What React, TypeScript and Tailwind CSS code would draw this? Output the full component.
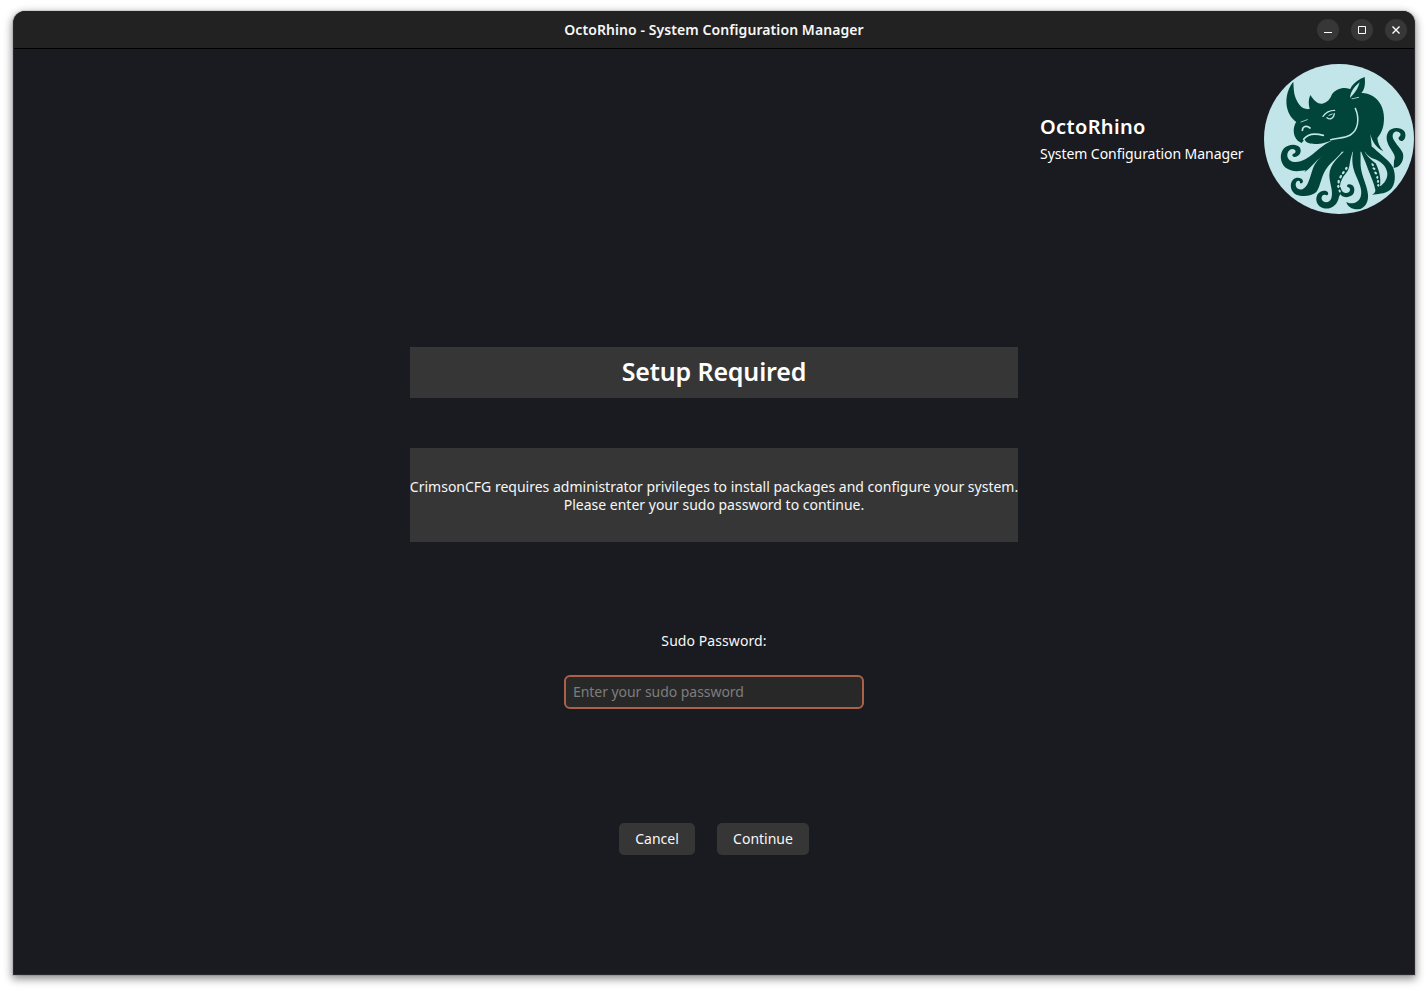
import type { ReactNode } from "react";

const DARK = "#01443a";
const LIGHT = "#c1e5e8";

function OctoRhinoLogo() {
  return (
    <svg viewBox="15 12 450 450" className="block h-[150px] w-[150px] shrink-0" role="img">
      <circle cx="240" cy="237" r="225" fill={LIGHT} />
      <g fill={DARK}>
        {/* head, horns and neck */}
        <path d="M103 65 C82 90 78 125 86 150 C92 168 101 178 112 186 C104 196 102 214 107 228 C112 240 120 246 128 249 L137 238 C140 248 150 252 168 252 C190 252 200 247 215 243 L225 262 L250 275 L330 275 L338 258 L334 222 C340 245 350 262 373 274 C362 260 356 248 355 234 C368 220 375 200 375 175 C375 145 362 122 342 109 C325 99 312 97 300 100 L270 86 C252 80 228 88 219 103 C214 116 206 128 190 131 C178 133 166 124 154 105 C148 118 148 132 152 147 C130 150 118 135 109 112 C104 98 104 82 103 65 Z" />
        {/* upper left arm */}
        <path d="M225 240 C190 252 170 280 140 297 C115 312 88 308 85 288 C84 272 98 262 108 270 C112 275 108 281 103 281 C97 284 101 291 108 291 C122 290 130 275 122 262 C112 250 88 252 75 265 C60 282 64 308 78 322 C98 338 122 334 140 330 L136 336 C150 330 162 312 178 298 C195 284 212 276 232 266 Z" />
        {/* lower left arm */}
        <path d="M226 262 C192 282 172 300 162 325 C153 350 148 382 130 388 C114 392 106 376 112 366 C116 360 124 362 123 368 C124 372 131 371 132 364 C131 353 112 349 102 359 C90 371 95 396 112 404 C130 411 158 409 172 396 C186 378 185 345 208 318 C225 300 240 288 248 276 L255 255 Z" />
        {/* bottom left arm */}
        <path d="M268 262 C240 290 212 312 211 345 C211 370 224 392 217 415 C212 430 193 430 188 418 C186 408 193 402 200 405 C206 408 210 402 206 396 C198 388 182 393 175 404 C166 422 177 440 194 445 C218 449 236 434 240 410 L246 398 C240 380 244 366 252 352 C258 342 268 335 271 318 C274 298 279 280 284 265 Z" />
        {/* bottom arm */}
        <path d="M284 265 C276 300 281 325 291 347 C302 372 311 391 305 410 C299 429 276 435 262 426 C265 440 280 449 297 448 C318 446 329 425 327 404 C325 378 308 350 305 318 C304 300 306 280 303 258 Z" />
        {/* right arms */}
        <path d="M304 268 C310 288 320 305 326 325 C336 350 345 370 349 389 C350 396 345 401 339 405 C356 401 376 403 392 391 C411 375 411 341 401 320 C388 298 362 283 345 265 L325 250 L309 254 C315 277 328 290 344 296 C366 304 382 317 385 339 C386 357 376 370 363 379 C367 355 360 330 350 310 C337 300 318 284 312 263 Z" />
        <path d="M404 324 L415 321 C431 311 436 291 431 278 C424 262 403 245 401 230 C400 217 412 211 420 217 C428 222 424 229 420 231 C416 236 422 244 430 243 C440 239 442 224 436 214 C424 200 398 201 388 215 C377 232 386 251 394 265 C403 280 412 290 405 302 Z" />
        {/* curled tip beside the bottom arm */}
        <path d="M239 390 C243 418 275 416 284 400 C290 386 283 373 271 373 C263 373 262 381 268 382 C277 385 274 401 259 399 C250 397 246 390 245 380 Z" />
        {/* ear */}
        <path d="M269 114 C264 94 283 62 317 51 C319 67 318 83 312 92 C306 102 298 106 290 110 Z" />
      </g>
      <path d="M273 114 C274 98 283 82 302 67 C298 81 292 94 281 105 Z" fill={LIGHT} />
      <g fill="none" stroke={LIGHT} strokeLinecap="round">
        <path d="M279 116 C284 118 291 112 299 112" strokeWidth="2.5" />
        <path d="M289 145 C303 177 297 211 274 225 C255 236 237 233 215 239" strokeWidth="4.5" />
        <path d="M134 238 C145 222 166 219 193 226" strokeWidth="5" />
        <path d="M130 211 C131 199 142 195 153 204" strokeWidth="5" />
        <path d="M126 186 L145 179" strokeWidth="2.5" />
        <path d="M192 169 C201 156 212 151 227 151" strokeWidth="4" />
        <path d="M204 173 C213 181 225 175 226 161" strokeWidth="4" />
        <path d="M210 166 L220 162" strokeWidth="3" />
      </g>
      {/* suckers */}
      <g fill={LIGHT}>
        <ellipse cx="262" cy="325" rx="3.5" ry="5" transform="rotate(30 262 325)" />
        <ellipse cx="253" cy="338" rx="3.5" ry="5.5" transform="rotate(35 253 338)" />
        <ellipse cx="245" cy="350" rx="3.5" ry="5.5" transform="rotate(25 245 350)" />
        <ellipse cx="239" cy="365" rx="3.5" ry="5.5" />
        <ellipse cx="238" cy="379" rx="3.5" ry="5" />
        <ellipse cx="242" cy="393" rx="3" ry="5" transform="rotate(-25 242 393)" />
        <ellipse cx="341" cy="314" rx="3" ry="5" transform="rotate(-35 341 314)" />
        <ellipse cx="345" cy="326" rx="3.5" ry="5" transform="rotate(-55 345 326)" />
        <ellipse cx="350" cy="339" rx="3.5" ry="5" transform="rotate(-40 350 339)" />
        <ellipse cx="355" cy="352" rx="3" ry="5" />
        <ellipse cx="357" cy="364" rx="3" ry="5" />
        <ellipse cx="358" cy="376" rx="3" ry="4" />
      </g>
    </svg>
  );
}

function WindowButton({ label, children }: { label: string; children: ReactNode }) {
  return (
    <button aria-label={label} className="flex h-[22px] w-[22px] items-center justify-center rounded-full bg-[#373737]">
      <svg viewBox="0 0 22 22" className="h-[22px] w-[22px]" fill="none" stroke="#fff">
        {children}
      </svg>
    </button>
  );
}

function TitleBar() {
  return (
    <header className="grid h-[38px] grid-cols-[1fr_auto_1fr] items-center border-b border-black bg-[#222222]">
      <span />
      <h1 className="text-[14px] font-semibold tracking-[0.08px] whitespace-nowrap text-[#f7f7f7]">OctoRhino - System Configuration Manager</h1>
      <div className="flex justify-end gap-3 pr-[7px]">
        <WindowButton label="Minimize"><path d="M7 13.5h8" /></WindowButton>
        <WindowButton label="Maximize"><path d="M7.5 7.5h7v7h-7z" /></WindowButton>
        <WindowButton label="Close"><path d="M7.5 7.5l7 7M14.5 7.5l-7 7" strokeWidth="1.4" /></WindowButton>
      </div>
    </header>
  );
}

export default function App() {
  return (
    <div className="h-[991px] w-[1428px] overflow-hidden bg-white pt-[11px] pl-[13px] font-['Noto_Sans',sans-serif] text-[14px] text-[#f7f7f7]">
      <div className="flex h-[964px] w-[1402px] flex-col overflow-hidden rounded-t-[12px] border-x border-b border-[#2b292c] bg-[#1a1b20] shadow-[0_3px_9px_1px_rgba(0,0,0,0.45),0_0_0_1px_rgba(0,0,0,0.08)]">
        <TitleBar />
        <div className="flex items-center justify-end gap-5 pt-[15px]">
          <div className="flex w-[204px] flex-col pt-[2px] whitespace-nowrap text-white">
            <span className="text-[20px] leading-[28px] font-semibold tracking-[0.35px]">OctoRhino</span>
            <span className="leading-[26px] tracking-[-0.05px]">System Configuration Manager</span>
          </div>
          <OctoRhinoLogo />
        </div>
        <main className="mt-[133px] flex flex-col items-center">
          <h2 className="flex h-[51px] w-[608px] items-center justify-center bg-[#363636] pb-[2px] text-[25px] font-semibold tracking-[-0.15px] text-white">Setup Required</h2>
          <p className="mt-[50px] flex h-[94px] w-[608px] flex-col items-center justify-center bg-[#363636] pt-[2px] leading-[18px] whitespace-nowrap">
            <span>CrimsonCFG requires administrator privileges to install packages and configure your system.</span>
            <span>Please enter your sudo password to continue.</span>
          </p>
          <label htmlFor="sudo" className="mt-[89px] leading-5 tracking-[0.08px]">Sudo Password:</label>
          <input
            id="sudo"
            type="password"
            placeholder="Enter your sudo password"
            className="mt-[24px] h-[34px] w-[300px] rounded-[6px] border-2 border-[#ab6148] bg-[#282828] px-[7px] pb-[2px] tracking-[-0.05px] outline-none placeholder:text-[#7d7d7d]"
          />
          <div className="mt-[114px] flex gap-[22px]">
            <button className="h-8 w-[76px] rounded-[5px] bg-[#363636] pb-[2px]">Cancel</button>
            <button className="h-8 w-[92px] rounded-[5px] bg-[#363636] pb-[2px]">Continue</button>
          </div>
        </main>
      </div>
    </div>
  );
}
